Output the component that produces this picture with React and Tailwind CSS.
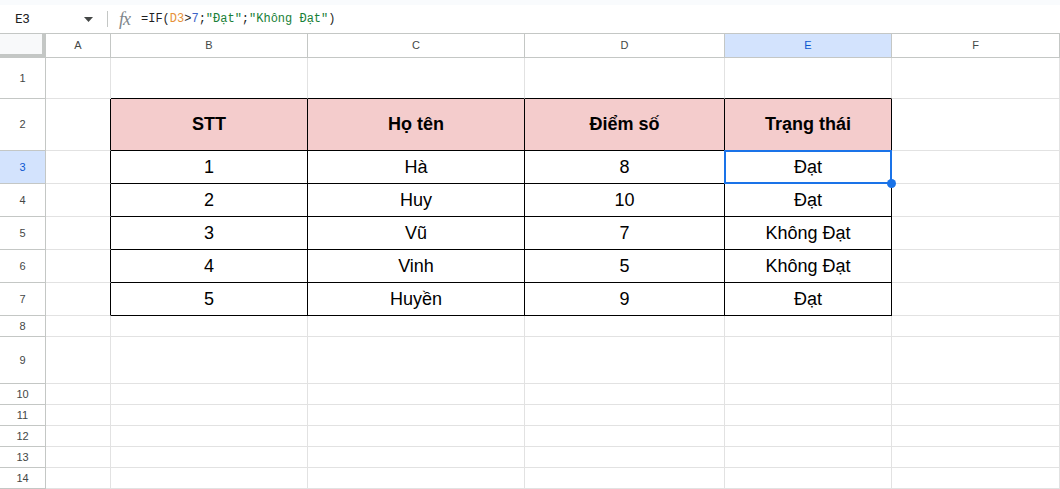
import React from "react";

const COLS = [
  { key: "A", w: "w-[65px]" },
  { key: "B", w: "w-[197px]" },
  { key: "C", w: "w-[217px]" },
  { key: "D", w: "w-[200px]" },
  { key: "E", w: "w-[167px]" },
  { key: "F", w: "flex-1" },
];

const data = [
  ["1", "Hà", "8", "Đạt"],
  ["2", "Huy", "10", "Đạt"],
  ["3", "Vũ", "7", "Không Đạt"],
  ["4", "Vinh", "5", "Không Đạt"],
  ["5", "Huyền", "9", "Đạt"],
];

const rowHeights = {
  1: "h-[41px]",
  2: "h-[52px]",
  3: "h-[33px]",
  4: "h-[33px]",
  5: "h-[33px]",
  6: "h-[33px]",
  7: "h-[33px]",
  8: "h-[21px]",
  9: "h-[47px]",
  10: "h-[21px]",
  11: "h-[21px]",
  12: "h-[21px]",
  13: "h-[21px]",
  14: "h-[21px]",
};

function RowHeader({ n, selected }) {
  return (
    <div
      className={
        "w-[46px] shrink-0 flex items-center justify-center border-r border-b border-r-[#c4c7c5] border-b-[#c4c7c5] text-[11px] " +
        (selected ? "bg-[#d3e3fd] text-[#0b57d0] font-medium" : "bg-white text-[#444746]")
      }
    >
      {n}
    </div>
  );
}

function Cell({ col, r, children }) {
  const inTable = r >= 2 && r <= 7;
  const tableCol = ["B", "C", "D", "E"].includes(col.key);
  let rb = "border-r-[#e2e2e2]";
  let bb = "border-b-[#e2e2e2]";
  let bg = "bg-white";
  if (inTable && (tableCol || col.key === "A")) rb = "border-r-black";
  if (inTable && tableCol) bb = "border-b-black";
  if (r === 1 && tableCol) bb = "border-b-black";
  if (r === 2 && tableCol) bg = "bg-[#f4cccc]";
  const header = r === 2;
  const selected = r === 3 && col.key === "E";
  return (
    <div
      className={
        col.w +
        " shrink-0 relative flex items-center justify-center border-r border-b " +
        rb +
        " " +
        bb +
        " " +
        bg +
        " text-[18px] text-black " +
        (header ? "font-bold" : "")
      }
    >
      {children}
      {selected && (
        <>
          <div className="absolute left-[-1px] top-[-1px] right-[-1px] bottom-[-1px] border-2 border-[#1a73e8] pointer-events-none" />
          <div className="absolute right-[-5px] bottom-[-5px] w-[9px] h-[9px] rounded-full bg-[#1a73e8] z-10" />
        </>
      )}
    </div>
  );
}

export default function App() {
  const rows = [];
  for (let r = 1; r <= 14; r++) {
    let content = ["", "", "", "", "", ""];
    if (r === 2) content = ["", "STT", "Họ tên", "Điểm số", "Trạng thái", ""];
    if (r >= 3 && r <= 7) content = ["", ...data[r - 3], ""];
    rows.push(
      <div key={r} className={"flex shrink-0 " + rowHeights[r]}>
        <RowHeader n={r} selected={r === 3} />
        {COLS.map((c, i) => (
          <Cell key={c.key} col={c} r={r}>
            {content[i]}
          </Cell>
        ))}
      </div>
    );
  }

  return (
    <div
      className="w-[1060px] h-[489px] overflow-hidden bg-white flex flex-col"
      style={{ fontFamily: '"Liberation Sans", Arial, sans-serif' }}
    >
      <div className="h-[5px] bg-[#f9fbfd] shrink-0" />
      {/* formula bar */}
      <div className="h-[29px] shrink-0 flex items-center bg-white border-b border-[#c4c7c5]">
        <div className="w-[107px] flex items-center justify-between pl-[15px] pr-[14px]">
          <span className="text-[13px] text-[#1f1f1f]" style={{ fontFamily: "Roboto, sans-serif" }}>E3</span>
          <svg width="9" height="5" viewBox="0 0 9 5">
            <path d="M0 0 L9 0 L4.5 5 Z" fill="#444746" />
          </svg>
        </div>
        <div className="w-px h-[16px] bg-[#c4c7c5]" />
        <span
          className="ml-[11px] text-[18px] italic text-[#80868b] leading-none tracking-[-1px]"
          style={{ fontFamily: '"Liberation Serif", serif' }}
        >
          fx
        </span>
        <span
          className="ml-[11px] text-[12px] text-[#1f1f1f] whitespace-pre"
          style={{ fontFamily: '"Liberation Mono", monospace' }}
        >
          =IF(<span className="text-[#e69138]">D3</span>&gt;<span className="text-[#3d63c8]">7</span>;<span className="text-[#188038]">"Đạt"</span>;<span className="text-[#188038]">"Không Đạt"</span>)
        </span>
      </div>
      {/* column headers */}
      <div className="h-[24px] shrink-0 flex">
        <div className="w-[46px] shrink-0 bg-[#f8f9fa] border-r-4 border-b-4 border-[#c4c7c5]" />
        {COLS.map((c) => (
          <div
            key={c.key}
            className={
              c.w +
              " shrink-0 flex items-center justify-center border-r border-b border-[#c4c7c5] text-[11px] " +
              (c.key === "E" ? "bg-[#d3e3fd] text-[#0b57d0] font-medium" : "bg-white text-[#444746]")
            }
          >
            {c.key}
          </div>
        ))}
      </div>
      {rows}
    </div>
  );
}
